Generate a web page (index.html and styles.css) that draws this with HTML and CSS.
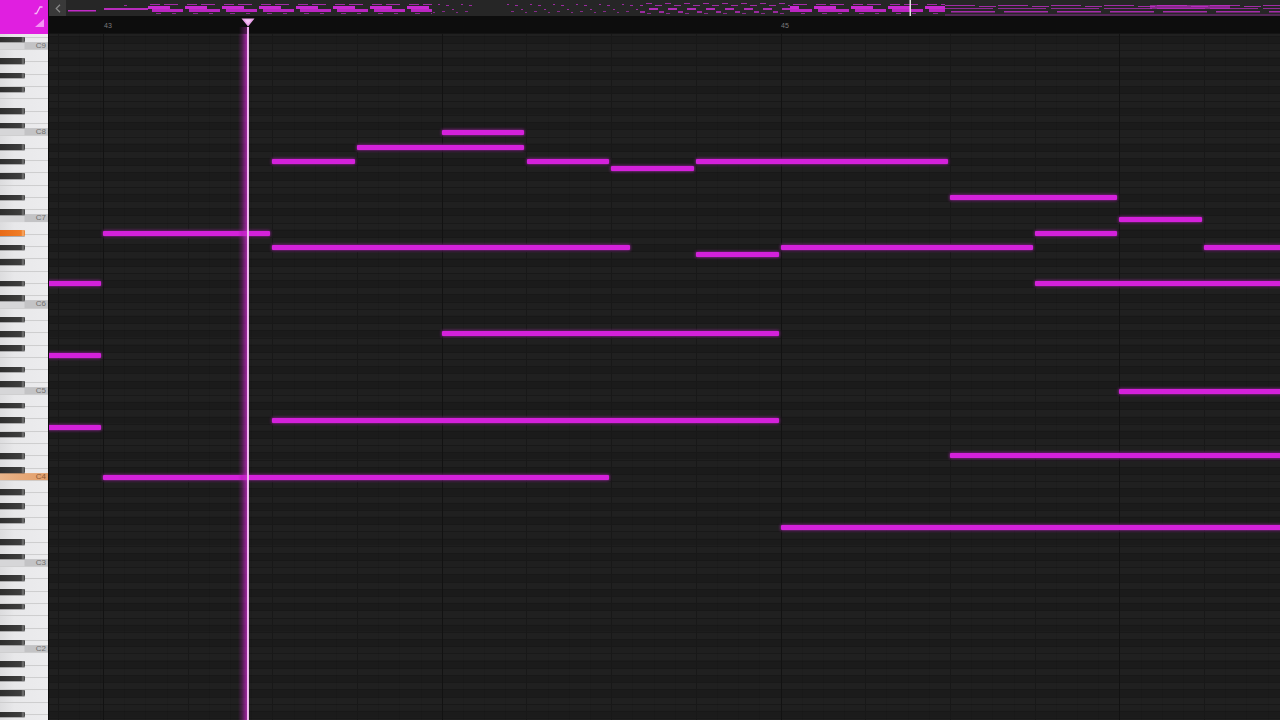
FILE: index.html
```html
<!DOCTYPE html>
<html lang="en">
<head>
<meta charset="utf-8">
<title>Piano roll</title>
<link rel="stylesheet" href="styles.css">
</head>
<body>
<div class="roll-app">
  <div class="corner">
    <svg class="corner-icons" width="48" height="34" viewBox="0 0 48 34">
      <path d="M34.5 13.5 h2 l3.5 -6.5 h2.5" fill="none" stroke="#f8b8f8" stroke-width="1.3"/>
      <polygon points="44,19 44,27 35,27" fill="#f592f5"/>
    </svg>
  </div>

  <div class="overview">
    <button class="ov-back" type="button"><svg width="6" height="9" viewBox="0 0 6 9"><path d="M5 0.8 L1.2 4.5 L5 8.2" fill="none" stroke="#8a8a8a" stroke-width="1.2"/></svg></button>
    <svg class="ov-map" viewBox="66 0 1214 16" preserveAspectRatio="none">
      <defs>
        <pattern id="ov-dense" x="148" y="0" width="37" height="16" patternUnits="userSpaceOnUse">
          <rect x="2" y="4" width="10" height="1" fill="#a42aa8"/>
          <rect x="16" y="4" width="14" height="1" fill="#a42aa8"/>
          <rect x="0" y="6" width="22" height="3" fill="#c82ad0"/>
          <rect x="4" y="9" width="31" height="3" fill="#bb26c2"/>
          <rect x="8" y="13" width="5" height="1" fill="#8e2a92"/>
          <rect x="24" y="13" width="4" height="1" fill="#8e2a92"/>
        </pattern>
        <pattern id="ov-sparse" x="0" y="0" width="23" height="16" patternUnits="userSpaceOnUse">
          <rect x="1" y="4" width="2" height="1" fill="#9a2a9e"/>
          <rect x="9" y="5" width="3" height="1" fill="#9a2a9e"/>
          <rect x="15" y="9" width="2" height="1" fill="#9a2a9e"/>
          <rect x="5" y="11" width="3" height="1" fill="#862a8a"/>
          <rect x="19" y="12" width="2" height="1" fill="#862a8a"/>
        </pattern>
        <pattern id="ov-mid" x="0" y="0" width="19" height="16" patternUnits="userSpaceOnUse">
          <rect x="0" y="3" width="6" height="1" fill="#a02ca4"/>
          <rect x="9" y="5" width="7" height="1" fill="#a02ca4"/>
          <rect x="3" y="8" width="9" height="2" fill="#b02cb6"/>
          <rect x="13" y="11" width="5" height="2" fill="#9a2a9e"/>
          <rect x="1" y="13" width="4" height="1" fill="#882a8c"/>
        </pattern>
        <pattern id="ov-lines" x="945" y="0" width="53" height="16" patternUnits="userSpaceOnUse">
          <rect x="0" y="5" width="30" height="1" fill="#a02ca4"/>
          <rect x="34" y="6" width="17" height="1" fill="#a02ca4"/>
          <rect x="0" y="8" width="48" height="1" fill="#922a96"/>
          <rect x="6" y="11" width="44" height="1.5" fill="#a62cab"/>
          <rect x="0" y="14.5" width="53" height="1" fill="#822a86"/>
        </pattern>
      </defs>
      <rect x="68" y="10" width="28" height="1.5" fill="#c22ac8"/>
      <rect x="104" y="5" width="36" height="1" fill="url(#ov-sparse)"/>
      <rect x="104" y="8" width="44" height="2" fill="#b82cbc"/>
      <rect x="148" y="0" width="284" height="16" fill="url(#ov-dense)"/>
      <rect x="432" y="0" width="40" height="16" fill="url(#ov-sparse)"/>
      <rect x="505" y="0" width="135" height="16" fill="url(#ov-sparse)"/>
      <rect x="640" y="0" width="150" height="16" fill="url(#ov-mid)"/>
      <rect x="790" y="0" width="155" height="16" fill="url(#ov-dense)"/>
      <rect x="945" y="0" width="335" height="16" fill="url(#ov-lines)"/>
      <rect x="1150" y="5" width="80" height="4" fill="#c52ccb" opacity="0.6"/>
      <rect x="909.5" y="0" width="1.5" height="16" fill="#e6e6e6"/>
    </svg>
  </div>

  <div class="ruler">
    <span class="bar-num bar-43">43</span>
    <span class="bar-num bar-45">45</span>
    <svg class="play-marker" width="14" height="9" viewBox="0 0 14 9"><polygon points="0.5,0.5 13.5,0.5 7,8.5" fill="#eaa2ea"/><polygon points="3.5,1.5 10.5,1.5 7,6" fill="#f4c4f4"/></svg>
    <div class="play-stem"></div>
  </div>

  <div class="keyboard">
    <div class="keys">
      <div class="octave">
        <div class="wk"></div><div class="wk"></div><div class="wk"></div><div class="wk"></div><div class="wk"></div><div class="wk"></div>
        <div class="wk c"><span class="c-label">C9</span></div>
        <i class="bk as"></i><i class="bk gs"></i><i class="bk fs"></i><i class="bk ds"></i><i class="bk cs"></i>
      </div>
      <div class="octave">
        <div class="wk"></div><div class="wk"></div><div class="wk"></div><div class="wk"></div><div class="wk"></div><div class="wk"></div>
        <div class="wk c"><span class="c-label">C8</span></div>
        <i class="bk as"></i><i class="bk gs"></i><i class="bk fs"></i><i class="bk ds"></i><i class="bk cs"></i>
      </div>
      <div class="octave">
        <div class="wk"></div><div class="wk"></div><div class="wk"></div><div class="wk"></div><div class="wk"></div><div class="wk"></div>
        <div class="wk c"><span class="c-label">C7</span></div>
        <i class="bk as"></i><i class="bk gs"></i><i class="bk fs"></i><i class="bk ds"></i><i class="bk cs"></i>
      </div>
      <div class="octave">
        <div class="wk"></div><div class="wk"></div><div class="wk"></div><div class="wk"></div><div class="wk"></div><div class="wk"></div>
        <div class="wk c"><span class="c-label">C6</span></div>
        <i class="bk as pressed"></i><i class="bk gs"></i><i class="bk fs"></i><i class="bk ds"></i><i class="bk cs"></i>
      </div>
      <div class="octave">
        <div class="wk"></div><div class="wk"></div><div class="wk"></div><div class="wk"></div><div class="wk"></div><div class="wk"></div>
        <div class="wk c"><span class="c-label">C5</span></div>
        <i class="bk as"></i><i class="bk gs"></i><i class="bk fs"></i><i class="bk ds"></i><i class="bk cs"></i>
      </div>
      <div class="octave">
        <div class="wk"></div><div class="wk"></div><div class="wk"></div><div class="wk"></div><div class="wk"></div><div class="wk"></div>
        <div class="wk c"><span class="c-label pressed">C4</span></div>
        <i class="bk as"></i><i class="bk gs"></i><i class="bk fs"></i><i class="bk ds"></i><i class="bk cs"></i>
      </div>
      <div class="octave">
        <div class="wk"></div><div class="wk"></div><div class="wk"></div><div class="wk"></div><div class="wk"></div><div class="wk"></div>
        <div class="wk c"><span class="c-label">C3</span></div>
        <i class="bk as"></i><i class="bk gs"></i><i class="bk fs"></i><i class="bk ds"></i><i class="bk cs"></i>
      </div>
      <div class="octave">
        <div class="wk"></div><div class="wk"></div><div class="wk"></div><div class="wk"></div><div class="wk"></div><div class="wk"></div>
        <div class="wk c"><span class="c-label">C2</span></div>
        <i class="bk as"></i><i class="bk gs"></i><i class="bk fs"></i><i class="bk ds"></i><i class="bk cs"></i>
      </div>
      <div class="octave">
        <div class="wk"></div><div class="wk"></div><div class="wk"></div><div class="wk"></div><div class="wk"></div><div class="wk"></div>
        <div class="wk c"><span class="c-label"></span></div>
        <i class="bk as"></i><i class="bk gs"></i><i class="bk fs"></i><i class="bk ds"></i><i class="bk cs"></i>
      </div>
    </div>
  </div>

  <div class="grid">
    <!-- --p: semitones above C4, --s: start beat, --l: length in beats -->
    <div class="note" style="--p:48;--s:4;--l:1"></div>
    <div class="note" style="--p:46;--s:3;--l:2"></div>
    <div class="note" style="--p:44;--s:2;--l:1"></div>
    <div class="note" style="--p:44;--s:5;--l:1"></div>
    <div class="note" style="--p:43;--s:6;--l:1"></div>
    <div class="note" style="--p:44;--s:7;--l:3"></div>
    <div class="note" style="--p:39;--s:10;--l:2"></div>
    <div class="note" style="--p:36;--s:12;--l:1"></div>
    <div class="note" style="--p:34;--s:0;--l:2"></div>
    <div class="note" style="--p:34;--s:11;--l:1"></div>
    <div class="note" style="--p:32;--s:2;--l:4.25"></div>
    <div class="note" style="--p:32;--s:8;--l:3"></div>
    <div class="note" style="--p:32;--s:13;--l:2"></div>
    <div class="note" style="--p:31;--s:7;--l:1"></div>
    <div class="note" style="--p:27;--s:-1;--l:1"></div>
    <div class="note" style="--p:27;--s:11;--l:4"></div>
    <div class="note" style="--p:20;--s:4;--l:4"></div>
    <div class="note" style="--p:17;--s:-1;--l:1"></div>
    <div class="note" style="--p:12;--s:12;--l:3"></div>
    <div class="note" style="--p:8;--s:2;--l:6"></div>
    <div class="note" style="--p:7;--s:-1;--l:1"></div>
    <div class="note" style="--p:3;--s:10;--l:5"></div>
    <div class="note" style="--p:0;--s:0;--l:6"></div>
    <div class="note" style="--p:-7;--s:8;--l:6"></div>
    <div class="playhead"></div>
  </div>
</div>
</body>
</html>
```

FILE: styles.css
```css
* { box-sizing: border-box; }

html, body {
  margin: 0;
  padding: 0;
  width: 1280px;
  height: 720px;
  overflow: hidden;
  background: #1c1c1c;
  font-family: "Liberation Sans", Arial, sans-serif;
}

.roll-app {
  --row: 7.18px;
  --oct: 86.16px;
  --beat: 84.7px;
  display: grid;
  grid-template-columns: 48px 1fr;
  grid-template-rows: 16px 18px 1fr;
  width: 1280px;
  height: 720px;
}

/* top-left tool corner */
.corner {
  grid-column: 1;
  grid-row: 1 / 3;
  background: #e01fe0;
}
.corner-icons { display: block; }

/* song overview strip */
.overview {
  grid-column: 2;
  grid-row: 1;
  display: flex;
  background: #262626;
  border-left: 1px solid #111;
  overflow: hidden;
}
.ov-back {
  flex: 0 0 17px;
  height: 16px;
  margin: 0;
  padding: 0;
  border: 0;
  background: #393939;
  display: flex;
  align-items: center;
  justify-content: center;
}
.ov-back svg { display: block; }
.ov-map {
  flex: 1;
  height: 16px;
  display: block;
}

/* time ruler */
.ruler {
  grid-column: 2;
  grid-row: 2;
  position: relative;
  background: #0d0d0d;
  border-left: 1px solid #111;
  border-bottom: 1px solid #141414;
}
.bar-num {
  position: absolute;
  top: 6px;
  font-size: 7px;
  line-height: 8px;
  color: #7a7a7a;
}
.bar-43 { left: 55px; }
.bar-45 { left: 732px; }
.play-marker {
  position: absolute;
  left: 192px;
  top: 2px;
  display: block;
}
.play-stem {
  position: absolute;
  left: 190px;
  top: 11px;
  bottom: -1px;
  width: 10px;
  background: linear-gradient(90deg, transparent 0, rgba(180, 40, 180, 0.45) 80%, #f0aef0 85%, #f0aef0 95%, transparent 100%);
}

/* piano keyboard */
.keyboard {
  grid-column: 1;
  grid-row: 3;
  overflow: hidden;
  background: #e6e6e8;
}
.keys {
  /* scroll offset: top octave starts above the visible area */
  transform: translateY(-69.9px);
}
.octave {
  position: relative;
  height: var(--oct);
  display: flex;
  flex-direction: column;
}
.wk {
  flex: 1;
  background: linear-gradient(90deg, #dcdcde 0, #e8e8ea 30%, #ececee 100%);
  border-bottom: 1px solid #cbcbcd;
  position: relative;
}
.wk.c {
  display: flex;
  align-items: flex-end;
}
.c-label {
  width: 100%;
  height: var(--row);
  background: linear-gradient(90deg, #d6d6d8 0, #d6d6d8 24px, #c3c3c5 25px);
  color: #707070;
  font-size: 8px;
  line-height: var(--row);
  text-align: right;
  padding-right: 2px;
}
.c-label.pressed {
  background: linear-gradient(90deg, #e9b48a 0, #e6a877 50%, #e29f6c 100%);
  color: #8a5a38;
}
.bk {
  position: absolute;
  left: 0;
  width: 25px;
  height: 5.6px;
  border-radius: 0 1px 1px 0;
  background: linear-gradient(90deg, #2e2e2e 0, #3e3e3e 85%, #7a7a7a 92%, #3a3a3a 100%);
  box-shadow: 0 1px 0 rgba(0, 0, 0, 0.25);
}
.bk.as { top: 8px; }
.bk.gs { top: 22.36px; }
.bk.fs { top: 36.72px; }
.bk.ds { top: 58.26px; }
.bk.cs { top: 72.62px; }
.bk.pressed {
  background: linear-gradient(90deg, #e86a16 0, #f07e28 85%, #f6b070 92%, #e87a2a 100%);
}

/* note grid */
.grid {
  grid-column: 2;
  grid-row: 3;
  position: relative;
  overflow: hidden;
  border-left: 1px solid #0b0b0b;
  background-color: #1e1e1e;
  background-image:
    repeating-linear-gradient(90deg, #121212 0 1px, transparent 1px 338.8px),
    repeating-linear-gradient(90deg, #181818 0 1px, transparent 1px 84.7px),
    repeating-linear-gradient(90deg, rgba(0,0,0,0.07) 0 1px, transparent 1px 21.175px),
    repeating-linear-gradient(180deg, #181818 0 1px, transparent 1px 7.18px),
    linear-gradient(180deg,
      #202020 0 7.18px,
      #1b1b1b 7.18px 14.36px,
      #202020 14.36px 21.54px,
      #1b1b1b 21.54px 28.72px,
      #202020 28.72px 35.9px,
      #1b1b1b 35.9px 43.08px,
      #202020 43.08px 50.26px,
      #1f1f1f 50.26px 57.44px,
      #1b1b1b 57.44px 64.62px,
      #202020 64.62px 71.8px,
      #1b1b1b 71.8px 78.98px,
      #1f1f1f 78.98px 86.16px);
  background-size: auto, auto, auto, auto, 100% 86.16px;
  background-position: 54px 0, 54px 0, 54px 0, 0 1.94px, 0 16.26px;
}

.note {
  position: absolute;
  height: 5px;
  top: calc(441px - var(--p) * var(--row));
  left: calc(54px + var(--s) * var(--beat));
  width: calc(var(--l) * var(--beat) - 2px);
  background: #d421db;
  border-radius: 1px;
  box-shadow: 0 0 3px 0.5px rgba(214, 40, 220, 0.6);
}

.playhead {
  position: absolute;
  top: 0;
  bottom: 0;
  left: 189px;
  width: 11px;
  background: linear-gradient(90deg,
    transparent 0,
    rgba(150, 30, 150, 0.35) 35%,
    rgba(200, 40, 200, 0.75) 80%,
    #f0aef0 82%,
    #f6c6f6 95%,
    rgba(160, 40, 160, 0.4) 100%);
}
```
